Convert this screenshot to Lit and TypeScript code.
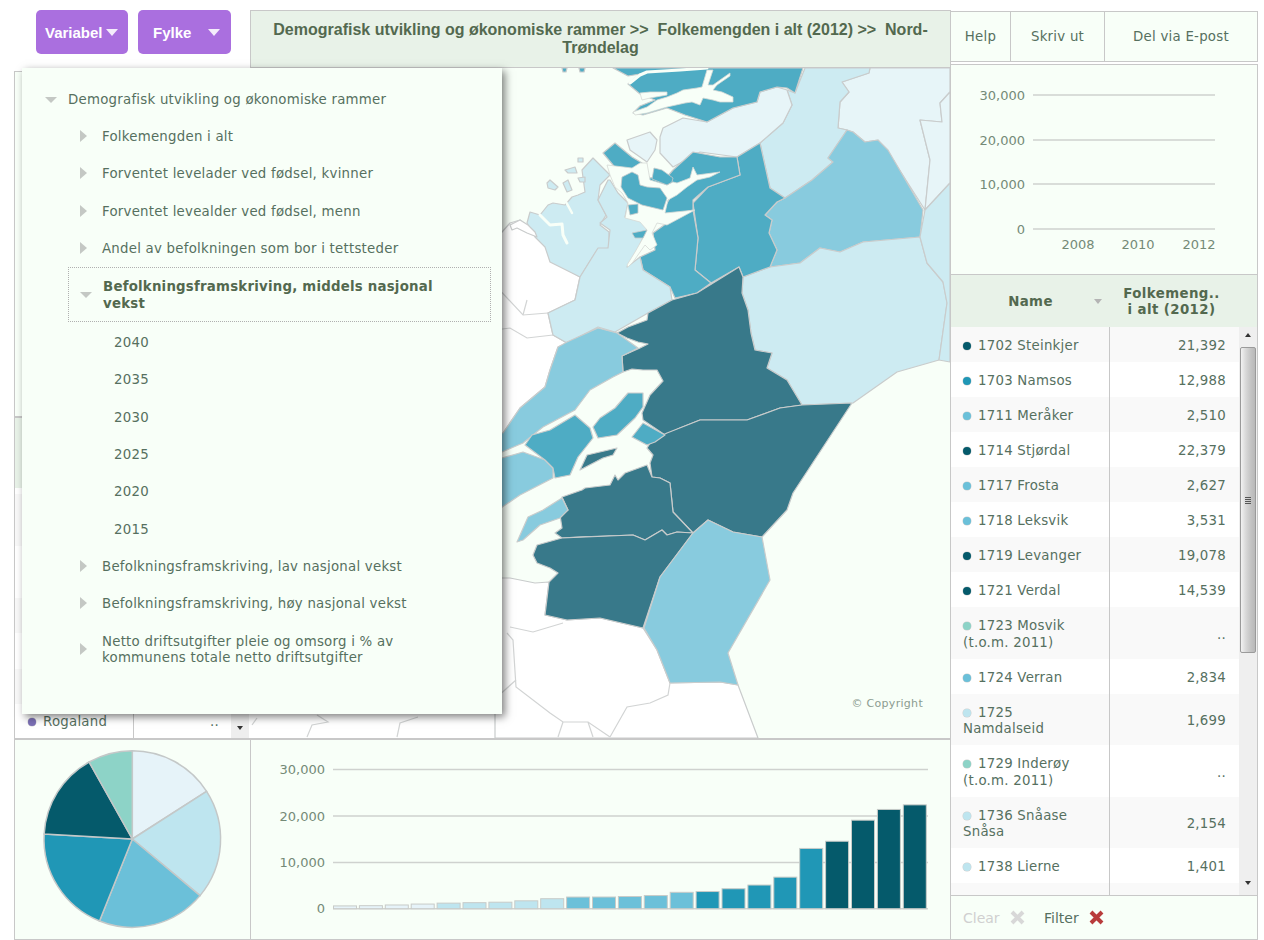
import { LitElement, html, css, svg } from 'lit';
import { customElement } from 'lit/decorators.js';

const DARK = '#055a6b';
const BLUE = '#2097b6';
const MID = '#6bc0d9';
const LIGHT = '#bee5ef';
const PALE = '#e6f3f9';
const MINT = '#8dd3c7';

// map colours are the choropleth ones at 80% opacity over the sea colour
const M_DARK = '#38798a';
const M_BLUE = '#4eacc4';
const M_MID = '#88cbde';
const M_LIGHT = '#cdebf2';
const M_PALE = '#e7f5f8';
const M_NONE = '#ffffff';
const SEA = '#f8fff8';

const REGIONS: [string, string][] = [
  // outside the selected county
  [M_NONE, '495,578 510,578 535,583 549,582 545,615 567,620 600,618 643,628 657,650 670,683 720,682 738,685 758,738 495,738'],
  [M_NONE, '495,240 510,223 520,220 537,233 545,240 550,260 580,277 575,300 548,313 553,335 567,343 558,347 550,370 545,387 520,408 503,433 495,435'],
  // north and east
  [M_PALE, '869,73 870,68 950,68 950,92 940,103 942,122 920,120 930,160 925,210 890,155 878,140 865,142 853,132 847,130 838,128 840,102 849,92 842,82'],
  [M_PALE, '920,120 942,122 940,103 950,92 950,183 925,210 930,160'],
  [M_LIGHT, '805,68 870,68 869,73 842,82 849,92 840,102 838,128 847,130 828,158 833,162 812,180 785,198 770,188 760,143 783,123 792,105 787,90 795,93'],
  [M_PALE, '663,128 683,118 707,122 733,108 757,102 760,92 777,87 787,90 792,105 783,123 760,143 737,157 700,152 673,167 660,153 660,137'],
  [M_BLUE, '613,68 803,68 795,93 787,88 777,87 760,92 757,102 733,108 707,122 685,115 667,108 643,115 633,113 640,106 655,100 640,94 628,84 640,74 628,76'],
  [M_PALE, '627,140 650,132 657,140 655,150 647,162 640,157 630,150'],
  [M_BLUE, '562,68 567,68 566,72 563,72'],
  [M_BLUE, '579,68 585,68 584,72 580,72'],
  [M_MID, '847,130 853,132 865,142 878,140 888,150 923,210 920,237 863,242 840,252 820,248 800,263 770,267 777,250 769,233 772,220 765,215 777,202 785,198 812,180 833,162 828,158'],
  [M_LIGHT, '743,277 770,267 800,263 820,248 840,252 863,242 920,237 927,263 943,282 947,303 939,360 897,372 853,403 802,405 787,380 767,368 772,353 755,350 751,333 748,310 742,293'],
  [M_LIGHT, '925,210 950,183 950,362 939,360 947,303 943,282 927,263 920,237'],
  // fjord cluster
  [M_BLUE, '760,143 770,188 785,198 777,202 765,215 772,220 769,233 777,250 770,267 743,277 739,267 711,283 695,270 698,238 693,203 708,187 740,175 737,157'],
  [M_BLUE, '693,210 667,223 653,233 655,250 640,257 643,270 670,287 675,298 697,293 711,283 695,270 698,238'],
  [M_BLUE, '673,170 693,152 720,157 737,157 740,175 708,187 693,200 693,210 673,215 660,220 660,207 664,196 660,185'],
  [M_BLUE, '603,153 615,143 632,157 642,163 645,172 650,178 660,176 668,186 670,198 663,210 640,208 628,204 620,185 618,172 613,165'],
  // west coast
  [M_LIGHT, '593,158 610,175 600,185 598,200 606,215 600,225 609,232 609,248 597,250 580,277 550,262 545,247 535,237 527,223 530,212 540,215 548,205 553,203 565,205 572,197 578,195 585,192 582,170'],
  [M_LIGHT, '608,180 598,200 607,217 600,223 610,230 608,248 598,248 580,277 575,300 548,313 553,335 567,343 598,327 615,332 648,313 672,300 670,287 643,270 640,257 627,267 638,248 647,230 643,217 625,217 628,203 618,193 610,180'],
  [M_LIGHT, '565,170 575,167 577,173 568,173'],
  [M_LIGHT, '578,158 583,158 583,162 578,162'],
  [M_LIGHT, '547,183 550,180 558,187 555,190 548,188'],
  [M_LIGHT, '563,183 568,180 572,190 567,192'],
  [M_LIGHT, '578,178 585,177 585,182 580,182'],
  [M_NONE, '510,225 520,220 528,225 535,232 537,237 527,233 517,228 512,230'],
  // the four dark municipalities
  [M_DARK, '672,300 697,293 739,267 743,277 742,293 748,310 751,333 755,350 772,353 767,368 787,380 802,405 780,408 747,420 700,420 680,428 665,435 643,420 642,413 650,395 663,381 657,370 643,370 632,369 623,372 622,356 640,348 648,344 638,342 627,338 617,333 628,327 647,320 648,313'],
  [M_DARK, '852,403 793,493 787,510 762,537 733,532 708,520 693,533 673,512 670,483 660,478 652,477 650,463 653,455 647,448 652,440 667,433 700,420 747,420 780,408 802,405'],
  [M_DARK, '562,497 582,490 585,488 610,485 615,475 618,480 625,473 647,465 652,477 660,478 670,483 673,512 693,533 677,532 667,535 662,530 645,540 633,535 577,537 562,538 555,533 562,528 560,515 568,510'],
  [M_DARK, '537,545 562,538 633,535 645,540 662,530 667,535 677,532 693,533 660,577 643,628 600,618 567,620 545,615 549,582 558,573 550,568 537,563 533,555'],
  [M_DARK, '587,455 617,448 613,455 603,458 580,470'],
  // south
  [M_MID, '708,520 733,532 762,537 770,580 728,653 738,685 720,682 670,683 657,650 644,628 660,577 693,533'],
  [M_MID, '598,328 617,333 638,348 622,356 623,372 613,377 590,390 575,410 543,427 523,443 495,455 495,433 503,433 520,408 545,387 550,370 558,347 567,342'],
  [M_MID, '523,452 545,460 553,468 553,478 520,495 495,512 495,460'],
  [M_MID, '562,498 568,510 560,518 540,525 523,540 517,542 528,517 543,510'],
  [M_BLUE, '575,415 590,428 593,438 578,457 570,475 555,478 553,468 545,460 525,445 532,435 550,430'],
  [M_BLUE, '643,393 643,407 635,418 617,435 598,438 593,427 600,418 615,408 628,393'],
  [M_BLUE, '632,437 643,423 665,435 655,442 647,445'],
];

// open water cut back over the polygons, outlined like the coast
const FJORD_BODIES = [
  '677,93 683,90 697,88 702,87 707,70 713,70 708,85 713,85 720,80 730,73 730,76 717,85 713,90 722,92 733,97 733,102 720,102 713,100 703,98 700,105 692,102 685,103 667,107 657,110 647,113 635,115 633,112 647,107 657,100 667,97',
  '640,93 650,92 667,92 667,95 650,98 642,100',
  '607,165 632,168 640,163 647,163 650,180 667,185 673,182 677,183 690,178 693,167 697,175 720,172 710,177 697,180 687,187 677,195 668,200 665,213 695,210 667,225 657,223 652,233 657,245 650,250 645,245 633,262 628,267 627,265 635,252 643,238 647,230 640,222 625,218 628,203 622,193 615,187 610,175',
];

// land lying inside the fjord bodies
const ISLANDS = [
  '654,168 662,170 673,178 672,182 667,185 652,179',
  '622,177 632,172 638,175 640,185 647,187 660,188 667,198 663,210 642,205 628,198 621,187',
  '628,205 638,204 638,213 630,215',
  '632,233 647,230 643,238 635,238',
];

// narrow inlets: [width, points]
const INLETS: [number, string][] = [
  [3, '630,83 640,75 647,72 680,70 707,68'],
  [3, '540,215 550,225 562,224 563,235 567,243'],
  [2.5, '565,200 572,213'],
];

// thin borders that have no fill of their own
const BORDERS = [
  '495,285 523,315 548,313',
  '523,315 527,300',
  '495,330 510,328 527,338 553,335',
  '507,633 513,640 516,687 550,713 563,722 588,722 610,737',
  '670,683 668,695 650,703 627,707 610,737',
  '563,722 558,737',
  '588,722 593,737',
  '516,680 497,697',
  '510,627 533,632 563,623',
  '252,725 257,718',
  '307,737 312,725 328,722 317,715',
  '397,737 400,723 418,717',
];

const TREE_TOP = [
  'Folkemengden i alt',
  'Forventet levelader ved fødsel, kvinner',
  'Forventet levealder ved fødsel, menn',
  'Andel av befolkningen som bor i tettsteder',
];
const YEARS = ['2040', '2035', '2030', '2025', '2020', '2015'];
const TREE_BOTTOM = [
  'Befolkningsframskriving, lav nasjonal vekst',
  'Befolkningsframskriving, høy nasjonal vekst',
];

const ROWS: [string, string, string][] = [
  ['1702 Steinkjer', '21,392', DARK],
  ['1703 Namsos', '12,988', BLUE],
  ['1711 Meråker', '2,510', MID],
  ['1714 Stjørdal', '22,379', DARK],
  ['1717 Frosta', '2,627', MID],
  ['1718 Leksvik', '3,531', MID],
  ['1719 Levanger', '19,078', DARK],
  ['1721 Verdal', '14,539', DARK],
  ['1723 Mosvik (t.o.m. 2011)', '..', MINT],
  ['1724 Verran', '2,834', MID],
  ['1725 Namdalseid', '1,699', LIGHT],
  ['1729 Inderøy (t.o.m. 2011)', '..', MINT],
  ['1736 Snåase Snåsa', '2,154', LIGHT],
  ['1738 Lierne', '1,401', LIGHT],
  ['', '', ''],
];

const BARS = [600, 650, 800, 1000, 1200, 1300, 1401, 1699, 2154, 2510, 2520, 2627, 2834, 3531, 3700, 4300, 5100, 6800, 12988, 14539, 19078, 21392, 22379];
const barColor = (i: number) => (i < 4 ? PALE : i < 9 ? LIGHT : i < 14 ? MID : i < 19 ? BLUE : DARK);

const PIE: [number, number, string][] = [
  [0, 57.3, PALE],
  [57.3, 129.9, LIGHT],
  [129.9, 201.8, MID],
  [201.8, 273.3, BLUE],
  [273.3, 330.7, DARK],
  [330.7, 360, MINT],
];

function slice(from: number, to: number, r: number) {
  const p = (a: number) => {
    const rad = (a * Math.PI) / 180;
    return `${(r * Math.sin(rad)).toFixed(2)} ${(-r * Math.cos(rad)).toFixed(2)}`;
  };
  return `M0 0L${p(from)}A${r} ${r} 0 ${to - from > 180 ? 1 : 0} 1 ${p(to)}Z`;
}

@customElement('app-root')
export class AppRoot extends LitElement {
  static styles = css`
    :host {
      display: block;
      position: relative;
      width: 1264px;
      height: 940px;
      overflow: hidden;
      background: #fff;
      font-family: 'DejaVu Sans', Verdana, sans-serif;
      font-size: 13.33px;
      color: #56705f;
    }
    .page {
      display: grid;
      grid-template-columns: 236px 701px 307px;
      padding: 10px 0 0 14px;
      height: 930px;
    }
    .col {
      display: flex;
      flex-direction: column;
      min-width: 0;
    }

    /* left column */
    .buttons {
      height: 61px;
      display: flex;
      gap: 10px;
      padding-left: 22px;
      box-sizing: border-box;
    }
    .btn {
      height: 44px;
      box-sizing: border-box;
      display: flex;
      align-items: center;
      justify-content: space-between;
      background: #aa6fdf;
      border-radius: 5px;
      color: #fff;
      font: bold 15px 'Liberation Sans', Arial, sans-serif;
    }
    .btn.variabel {
      width: 92px;
      padding: 0 10px 0 9px;
    }
    .btn.fylke {
      width: 93px;
      padding: 0 11px 0 15px;
    }
    .btn i {
      width: 0;
      height: 0;
      border: 6px solid transparent;
      border-top: 7px solid #f4ecfb;
      border-bottom: 0;
    }
    .panel-left {
      height: 667px;
      box-sizing: border-box;
      border: solid #c8c8c8;
      border-width: 1px 0 0 1px;
      display: flex;
      flex-direction: column;
      background: #fff;
    }
    .left-chart {
      height: 344px;
      background: #f8fff8;
      border-bottom: 2px solid #c8c8c8;
    }
    .left-head {
      height: 70px;
      background: #e8f2e8;
    }
    .left-body {
      flex: 1;
      display: flex;
      min-height: 0;
    }
    .left-rows {
      flex: 1;
      min-width: 0;
    }
    .left-row {
      display: flex;
      align-items: center;
      background: #fff;
      letter-spacing: 0.24px;
    }
    .left-row.alt {
      background: #f8f8f8;
    }
    .left-name {
      width: 119px;
      box-sizing: border-box;
      padding-left: 13px;
      align-self: stretch;
      display: flex;
      align-items: center;
      border-right: 1px solid #c8c8c8;
    }
    .left-val {
      flex: 1;
      text-align: right;
      padding-right: 12px;
    }
    .left-scroll {
      width: 18px;
      margin-right: 1px;
      background: #eeeeee;
      display: flex;
      flex-direction: column;
      justify-content: flex-end;
      align-items: center;
      padding-bottom: 8px;
      box-sizing: border-box;
    }
    .pie-panel {
      flex: 1;
      border: 1px solid #c8c8c8;
      border-top-width: 2px;
      border-right: 0;
      background: #f8fff8;
      display: flex;
    }

    /* middle column */
    .title {
      height: 58px;
      box-sizing: border-box;
      border: 1px solid #c8c8c8;
      background: #e8f2e8;
      color: #53694f;
      font: bold 16px/18px 'Liberation Sans', Arial, sans-serif;
      text-align: center;
      padding: 10px 19px 0;
    }
    .map {
      height: 670px;
      position: relative;
      background: #f8fff8;
      border-right: 1px solid #c8c8c8;
      box-sizing: border-box;
    }
    .map svg {
      display: block;
    }
    .copyright {
      position: absolute;
      right: 27px;
      bottom: 28px;
      font-size: 11px;
      letter-spacing: 0.3px;
      color: #8b9c90;
    }
    .bar-panel {
      flex: 1;
      border: solid #c8c8c8;
      border-width: 2px 1px 1px 1px;
      background: #f8fff8;
      display: flex;
    }

    /* right column */
    .tools {
      height: 51px;
      margin-top: 1px;
      box-sizing: border-box;
      border: 1px solid #c8c8c8;
      border-left: 0;
      background: #f8fff8;
      display: flex;
      align-items: stretch;
      letter-spacing: 0.24px;
    }
    .tools div {
      display: flex;
      align-items: center;
      justify-content: center;
      border-right: 1px solid #c8c8c8;
      box-sizing: border-box;
    }
    .tools .help {
      width: 60px;
    }
    .tools .print {
      width: 94px;
    }
    .tools .mail {
      flex: 1;
      border-right: 0;
    }
    .spark {
      height: 211px;
      margin-top: 2px;
      box-sizing: border-box;
      border: 1px solid #c8c8c8;
      border-left: 0;
      background: #f8fff8;
      display: flex;
    }
    .thead {
      height: 52px;
      padding-top: 1px;
      background: #e8f2e8;
      display: flex;
      font-weight: bold;
      color: #53694f;
      line-height: 16px;
      letter-spacing: 0.4px;
      border-right: 1px solid #c8c8c8;
      box-sizing: border-box;
    }
    .thead .name {
      width: 159px;
      position: relative;
      display: flex;
      align-items: center;
      justify-content: center;
      box-sizing: border-box;
    }
    .thead .sort {
      position: absolute;
      right: 8px;
      top: 23px;
      width: 0;
      height: 0;
      border: 4px solid transparent;
      border-top: 5px solid #b4b4b4;
      border-bottom: 0;
    }
    .thead .val {
      flex: 1;
      display: flex;
      align-items: center;
      justify-content: center;
      text-align: center;
      padding-right: 24px;
    }
    .tbody {
      height: 568px;
      display: flex;
      border-right: 1px solid #c8c8c8;
      box-sizing: border-box;
    }
    .rows {
      width: 288px;
      overflow: hidden;
    }
    .row {
      display: flex;
      line-height: 16.5px;
      background: #fff;
      letter-spacing: 0.24px;
    }
    .row.alt {
      background: #f9f9f9;
    }
    .row .name {
      width: 159px;
      box-sizing: border-box;
      padding: 11px 14px 7.5px 12px;
      border-right: 1px solid #c8c8c8;
    }
    .row .val {
      flex: 1;
      padding: 4px 13px 0 0;
      text-align: right;
      align-self: center;
    }
    .dot {
      display: inline-block;
      width: 8px;
      height: 8px;
      border-radius: 50%;
      margin-right: 7px;
      box-shadow: 0 0 0 0.5px #cfcfcf;
    }
    .scroll {
      flex: 1;
      background: #efefef;
      display: flex;
      flex-direction: column;
      align-items: center;
      box-sizing: border-box;
      padding-top: 6px;
    }
    .arrow-up,
    .arrow-down {
      width: 0;
      height: 0;
      border: 3px solid transparent;
    }
    .arrow-up {
      border-bottom: 4px solid #333;
      border-top: 0;
    }
    .arrow-down {
      border-top: 4px solid #333;
      border-bottom: 0;
    }
    .thumb {
      width: 16px;
      height: 306px;
      margin: 10px 0 228px;
      box-sizing: border-box;
      border: 1px solid #9a9a9a;
      border-radius: 2px;
      background: linear-gradient(to right, #f2f2f2, #d8d8d8 35%, #c4c4c4 70%, #b8b8b8);
      display: flex;
      align-items: center;
      justify-content: center;
    }
    .grip {
      width: 6px;
      height: 7px;
      background: repeating-linear-gradient(to bottom, #555 0, #555 1px, transparent 1px, transparent 2px);
    }
    .tfoot {
      flex: 1;
      box-sizing: border-box;
      border: 1px solid #c8c8c8;
      border-left: 0;
      background: #f8fff8;
      display: flex;
      align-items: center;
      padding-left: 12px;
      font-size: 14px;
    }
    .tfoot .clear {
      color: #d0d0d0;
      width: 81px;
      display: flex;
      align-items: center;
      gap: 10px;
    }
    .tfoot .filter {
      display: flex;
      align-items: center;
      gap: 10px;
    }

    /* tree dropdown */
    .menu {
      position: absolute;
      left: 22px;
      top: 68px;
      width: 480px;
      height: 646px;
      box-sizing: border-box;
      background: #f8fff8;
      box-shadow: 3px 3px 8px rgba(0, 0, 0, 0.5);
      padding: 13px 11px 0 46px;
      line-height: 16px;
      letter-spacing: 0.24px;
    }
    .node {
      height: 37.3px;
      display: flex;
      align-items: center;
      position: relative;
    }
    .node.sub {
      padding-left: 34px;
    }
    .node.year {
      padding-left: 46px;
    }
    .node.tall {
      height: 49px;
      margin-top: 3px;
    }
    .tri-r {
      position: absolute;
      left: 12px;
      top: 50%;
      margin-top: -7px;
      width: 0;
      height: 0;
      border: 6px solid transparent;
      border-left: 7px solid #c4c8c4;
      border-right: 0;
    }
    .tri-d {
      position: absolute;
      left: -23px;
      top: 50%;
      margin-top: -3px;
      width: 0;
      height: 0;
      border: 6.5px solid transparent;
      border-top: 6px solid #c4c8c4;
      border-bottom: 0;
    }
    .selected {
      height: 55px;
      box-sizing: border-box;
      border: 1px dotted #b0b0b0;
      display: flex;
      align-items: center;
      padding: 0 30px 0 34px;
      font-weight: bold;
      letter-spacing: 0.22px;
      color: #53694f;
      position: relative;
      margin-bottom: 2px;
      line-height: 17px;
    }
    .selected .tri-d {
      left: 11px;
    }
  `;

  // same axis drawing for the small chart and the bar chart
  private axis(labels: string[], ys: number[], labelX: number, x1: number, x2: number) {
    return labels.map(
      (t, i) => svg`
        <line x1=${x1} x2=${x2} y1=${ys[i]} y2=${ys[i]} stroke="#cfd2cf" stroke-width="1.5" />
        <text x=${labelX} y=${ys[i] + 4.5} text-anchor="end" font-family="'DejaVu Sans'" font-size="13" fill="#748a77">${t}</text>
      `
    );
  }

  private renderBars() {
    const ys = [769.5, 816, 862.5, 908.7];
    return html`<svg width="699" height="199" viewBox="251 740 699 199">
      ${this.axis(['30,000', '20,000', '10,000', '0'], ys, 325, 333, 928)}
      ${BARS.map((v, i) => {
        const h = (v / 10000) * 46.4;
        return svg`<rect x=${333.5 + i * 25.9} y=${908.7 - h} width="23" height=${h} fill=${barColor(i)} stroke="#c8cbc8" stroke-width="1" />`;
      })}
    </svg>`;
  }

  private renderSpark() {
    return html`<svg width="306" height="209" viewBox="951 65 306 209">
      ${this.axis(['30,000', '20,000', '10,000', '0'], [95, 140, 184, 229], 1025, 1033, 1215)}
      ${[['2008', 1078], ['2010', 1138], ['2012', 1199]].map(
        ([t, x]) => svg`<text x=${x} y="249" text-anchor="middle" font-family="'DejaVu Sans'" font-size="13" fill="#748a77">${t}</text>`
      )}
    </svg>`;
  }

  private renderPie() {
    return html`<svg width="235" height="199" viewBox="15 740 235 199">
      <g transform="translate(132.3 839)">
        ${PIE.map(([a, b, c]) => svg`<path d=${slice(a, b, 88.3)} fill=${c} stroke="#c4c8c8" stroke-width="1.5" />`)}
      </g>
    </svg>`;
  }

  private renderMap() {
    return html`<svg width="700" height="670" viewBox="250 68 700 670">
      <rect x="250" y="68" width="251" height="670" fill=${M_NONE} />
      ${REGIONS.map(
        ([fill, pts]) => svg`<polygon points=${pts} fill=${fill} stroke="#c9cccc" stroke-width="1.2" stroke-linejoin="round" />`
      )}
      ${FJORD_BODIES.map(
        (pts) => svg`<polygon points=${pts} fill=${SEA} stroke="#d5d9d6" stroke-width="0.8" stroke-linejoin="round" />`
      )}
      ${ISLANDS.map(
        (pts) => svg`<polygon points=${pts} fill=${M_BLUE} stroke="#c9cccc" stroke-width="0.8" stroke-linejoin="round" />`
      )}
      ${INLETS.map(
        ([w, pts]) => svg`<polyline points=${pts} fill="none" stroke=${SEA} stroke-width=${w} stroke-linejoin="round" stroke-linecap="round" />`
      )}
      ${BORDERS.map(
        (pts) => svg`<polyline points=${pts} fill="none" stroke="#d2d4d4" stroke-width="1.2" />`
      )}
    </svg>`;
  }

  private cross(color: string) {
    return html`<svg width="15" height="15" viewBox="0 0 15 15">
      <path d="M2 2L13 13M13 2L2 13" stroke=${color} stroke-width="4" fill="none" />
    </svg>`;
  }

  private renderMenu() {
    return html`<div class="menu">
      <div class="node"><span class="tri-d"></span>Demografisk utvikling og økonomiske rammer</div>
      ${TREE_TOP.map((t) => html`<div class="node sub"><span class="tri-r"></span>${t}</div>`)}
      <div class="selected"><span class="tri-d"></span>Befolkningsframskriving, middels nasjonal vekst</div>
      ${YEARS.map((y) => html`<div class="node year">${y}</div>`)}
      ${TREE_BOTTOM.map((t) => html`<div class="node sub"><span class="tri-r"></span>${t}</div>`)}
      <div class="node sub tall">
        <span class="tri-r"></span>Netto driftsutgifter pleie og omsorg i % av<br />kommunens totale netto driftsutgifter
      </div>
    </div>`;
  }

  render() {
    const leftRows = [6, 52, 52, 35, 36, 35, 35];
    return html`
      <div class="page">
        <div class="col">
          <div class="buttons">
            <div class="btn variabel">Variabel<i></i></div>
            <div class="btn fylke">Fylke<i></i></div>
          </div>
          <div class="panel-left">
            <div class="left-chart"></div>
            <div class="left-head"></div>
            <div class="left-body">
              <div class="left-rows">
                ${leftRows.map((h, i) =>
                  i === leftRows.length - 1
                    ? html`<div class="left-row" style="height:${h}px">
                        <div class="left-name"><span class="dot" style="background:#7b6fb5"></span>Rogaland</div>
                        <div class="left-val">..</div>
                      </div>`
                    : html`<div class="left-row ${i % 2 ? 'alt' : ''}" style="height:${h}px"></div>`
                )}
              </div>
              <div class="left-scroll"><span class="arrow-down"></span></div>
            </div>
          </div>
          <div class="pie-panel">${this.renderPie()}</div>
        </div>

        <div class="col">
          <div class="title">Demografisk utvikling og økonomiske rammer &gt;&gt;&nbsp; Folkemengden i alt (2012) &gt;&gt;&nbsp; Nord-Trøndelag</div>
          <div class="map">
            ${this.renderMap()}
            <div class="copyright">© Copyright</div>
          </div>
          <div class="bar-panel">${this.renderBars()}</div>
        </div>

        <div class="col">
          <div class="tools">
            <div class="help">Help</div>
            <div class="print">Skriv ut</div>
            <div class="mail">Del via E-post</div>
          </div>
          <div class="spark">${this.renderSpark()}</div>
          <div class="thead">
            <div class="name">Name<span class="sort"></span></div>
            <div class="val">Folkemeng..<br />i alt (2012)</div>
          </div>
          <div class="tbody">
            <div class="rows">
              ${ROWS.map(
                ([name, val, color], i) => html`<div class="row ${i % 2 ? '' : 'alt'}">
                  <div class="name">
                    ${name ? html`<span class="dot" style="background:${color}"></span>` : ''}${name}
                  </div>
                  <div class="val">${val}</div>
                </div>`
              )}
            </div>
            <div class="scroll">
              <span class="arrow-up"></span>
              <div class="thumb"><span class="grip"></span></div>
              <span class="arrow-down"></span>
            </div>
          </div>
          <div class="tfoot">
            <div class="clear">Clear ${this.cross('#d8d8d8')}</div>
            <div class="filter">Filter ${this.cross('#b83c3c')}</div>
          </div>
        </div>
      </div>
      ${this.renderMenu()}
    `;
  }
}
